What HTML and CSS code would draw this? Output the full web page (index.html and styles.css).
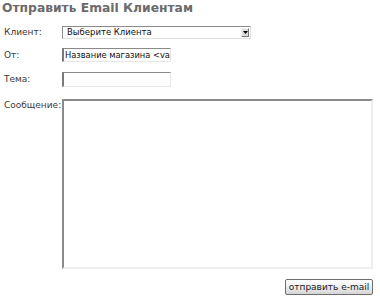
FILE: index.html
```html
<!DOCTYPE html>
<html>
<head>
<meta charset="utf-8">
<link rel="stylesheet" href="styles.css">
</head>
<body>
<h1 class="title">Отправить Email Клиентам</h1>
<form class="form">
  <div class="row row-client">
    <label class="label">Клиент:</label>
    <div class="select-wrap">
      <select class="select"><option>Выберите Клиента</option></select>
      <span class="arrow"><svg width="5" height="3" viewBox="0 0 5 3"><path d="M0 0H5L2.5 3Z" fill="#000"/></svg></span>
    </div>
  </div>
  <div class="row row-from">
    <label class="label">От:</label>
    <input class="input" type="text" value="Название магазина <vamshop@example.com>">
  </div>
  <div class="row row-subject">
    <label class="label">Тема:</label>
    <input class="input" type="text" value="">
  </div>
  <div class="row row-message">
    <label class="label label-top">Сообщение:</label>
    <textarea class="textarea"></textarea>
  </div>
  <div class="actions">
    <button type="button" class="button">отправить e-mail</button>
  </div>
</form>
</body>
</html>
```
FILE: styles.css
```css
html, body {
  margin: 0;
  padding: 0;
  background: #fff;
}
body {
  width: 380px;
  height: 298px;
  overflow: hidden;
  font-family: "DejaVu Sans", Verdana, sans-serif;
  color: #333;
}
.title {
  margin: 0;
  padding: 1px 0 0 2px;
  font-size: 12.3px;
  line-height: 15px;
  font-weight: bold;
  color: #6b6b6b;
}
.form {
  display: flex;
  flex-direction: column;
  padding-top: 10px;
}
.row {
  display: flex;
  align-items: center;
}
.label {
  width: 62px;
  flex: none;
  box-sizing: border-box;
  padding-left: 4px;
  font-size: 9px;
  line-height: 11px;
  white-space: nowrap;
  color: #3a3a3a;
}
.label-top {
  align-self: flex-start;
  padding-top: 1px;
}
.row-from { margin-top: 9px; }
.row-subject { margin-top: 10px; }
.row-message { margin-top: 12px; }
.select-wrap {
  position: relative;
  width: 189px;
  height: 13px;
}
.select {
  display: block;
  appearance: none;
  -webkit-appearance: none;
  width: 100%;
  height: 13px;
  box-sizing: border-box;
  margin: 0;
  padding: 0 0 0 4px;
  border: 1px solid;
  border-color: #8a8a8a #e2e2e2 #e2e2e2 #8a8a8a;
  border-radius: 0;
  background: #fff;
  font-family: "DejaVu Sans", Verdana, sans-serif;
  font-size: 8.5px;
  line-height: 11px;
  color: #111;
}
.arrow {
  position: absolute;
  right: 2px;
  top: 2px;
  width: 8px;
  height: 9px;
  box-sizing: border-box;
  border: 1px solid;
  border-color: #f4f4f4 #777 #777 #f4f4f4;
  background: #dcdcdc;
  display: flex;
  align-items: center;
  justify-content: center;
}
.arrow svg { display: block; }
.input {
  display: block;
  width: 109px;
  height: 14px;
  box-sizing: border-box;
  margin: 0;
  padding: 0 0 0 1px;
  border: 1px solid;
  border-left-width: 2px;
  border-color: #8a8a8a #e6e6e6 #e6e6e6 #7a7a7a;
  border-radius: 0;
  background: #fff;
  font-family: "DejaVu Sans", Verdana, sans-serif;
  font-size: 8.3px;
  color: #111;
  outline: none;
}
.row-subject .input { height: 15px; }
.textarea {
  display: block;
  width: 311px;
  height: 170px;
  box-sizing: border-box;
  margin: 0;
  padding: 0;
  border: 2px solid;
  border-color: #8a8a8a #eeeeee #eeeeee #8a8a8a;
  border-radius: 0;
  resize: none;
  background: #fff;
  outline: none;
}
.actions {
  display: flex;
  justify-content: flex-end;
  margin-top: 10px;
  padding-right: 7px;
}
.button {
  width: 88px;
  height: 16px;
  box-sizing: border-box;
  margin: 0;
  padding: 0;
  border: 1px solid #6e6e6e;
  border-radius: 2px;
  background: linear-gradient(#ffffff, #f1f1f1 45%, #d4d4d4);
  font-family: "DejaVu Sans", Verdana, sans-serif;
  font-size: 9px;
  line-height: 14px;
  color: #222;
}
```
